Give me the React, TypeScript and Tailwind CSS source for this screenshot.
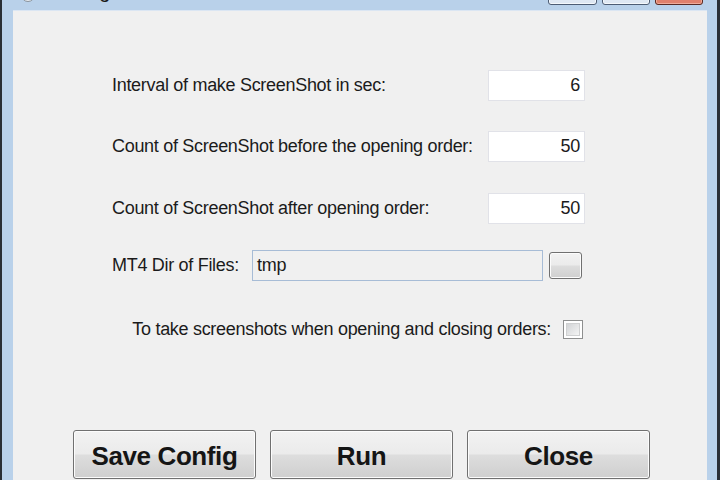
import type { ReactNode } from 'react'

// ── Pieces ───────────────────────────────

function NumberField({ value }: { value: string }): ReactNode {
  return (
    <div className="ml-auto w-[97px] h-[31px] bg-white border border-[#e1e2e8] flex items-center justify-end pr-[4px] text-[18px] tracking-[-0.3px] text-[#1b1b1b]">
      {value}
    </div>
  )
}

function FormRow({ label, children }: { label: string; children: ReactNode }): ReactNode {
  return (
    <div className="h-[31px] flex items-center pl-[99px] pr-[122px]">
      <span className="text-[18px] tracking-[-0.3px] text-[#1b1b1b] whitespace-nowrap">{label}</span>
      {children}
    </div>
  )
}

function BigButton({ label }: { label: string }): ReactNode {
  return (
    <button
      type="button"
      className="w-[183px] h-[49px] rounded-[3px] border border-[#707070] bg-[linear-gradient(to_bottom,#f2f2f2_0%,#ebebeb_48%,#dddddd_52%,#cfcfcf_100%)] flex items-center justify-center pt-[4px] font-['Liberation_Sans',Arial,sans-serif] font-bold text-[26px] tracking-[-0.4px] text-[#151515] shadow-[inset_0_0_0_1px_#fcfcfc]"
    >
      {label}
    </button>
  )
}

// ── Main export ──────────────────────────

export default function App(): ReactNode {
  return (
    <div className="w-[720px] h-[480px] overflow-hidden flex bg-[#b9d1ea] border-l-2 border-r-[3px] border-[#2a2f36] font-['Liberation_Sans',Arial,sans-serif]">
      <div className="flex-1 flex flex-col">
        {/* title bar, mostly cut off above the picture */}
        <div className="h-[10px] shrink-0 overflow-hidden flex items-start">
          <div className="ml-[19px] mt-[-12px] w-[14px] h-[14px] rounded-full bg-[#e8ecf0] border border-[#8a939c]" />
          <span className="ml-[13px] mt-[-20px] text-[20px] leading-[23px] text-[#1b1b1b]">Settings</span>
          <div className="ml-auto mr-[14px] mt-[-15px] flex gap-[5px]">
            <div className="w-[49px] h-[20px] rounded-[3px] border border-[#4e5d74] bg-[#dfe8f3] shadow-[inset_0_0_0_1px_#f4f8fc]" />
            <div className="w-[48px] h-[20px] rounded-[3px] border border-[#4e5d74] bg-[#dfe8f3] shadow-[inset_0_0_0_1px_#f4f8fc]" />
            <div className="w-[48px] h-[20px] rounded-[3px] border border-[#5a2a24] bg-[#e0806c] shadow-[inset_0_0_0_1px_#efab9a]" />
          </div>
        </div>

        {/* client area */}
        <div className="flex-1 ml-[11px] mr-[10px] bg-[#f0f0f0] border-t border-[#dbe6f3] flex flex-col">
          <div className="mt-[59px]">
            <FormRow label="Interval of make ScreenShot in sec:">
              <NumberField value="6" />
            </FormRow>
          </div>
          <div className="mt-[30px]">
            <FormRow label="Count of ScreenShot before the opening order:">
              <NumberField value="50" />
            </FormRow>
          </div>
          <div className="mt-[31px]">
            <FormRow label="Count of ScreenShot after opening order:">
              <NumberField value="50" />
            </FormRow>
          </div>
          <div className="mt-[26px]">
            <FormRow label="MT4 Dir of Files:">
              <div className="ml-auto w-[291px] h-[31px] bg-[#f0f0f0] border border-[#a7bcd6] flex items-center pl-[4px] text-[18px] tracking-[-0.3px] text-[#1b1b1b]">
                tmp
              </div>
              <button
                type="button"
                className="ml-[6px] mr-[3px] w-[33px] h-[27px] rounded-[3px] border border-[#707070] bg-[linear-gradient(to_bottom,#f2f2f2_0%,#ebebeb_48%,#dddddd_52%,#cfcfcf_100%)] shadow-[inset_0_0_0_1px_#fcfcfc]"
              />
            </FormRow>
          </div>
          <div className="mt-[33px] h-[31px] flex items-center justify-end pr-[122px]">
            <span className="text-[18px] tracking-[-0.3px] text-[#1b1b1b] whitespace-nowrap">
              To take screenshots when opening and closing orders:
            </span>
            <div className="ml-[12px] mr-[2px] w-[20px] h-[19px] border border-[#8e8f8f] bg-white p-[2px]">
              <div className="w-full h-full border border-[#cfd0d1] bg-[linear-gradient(135deg,#d2d4d6,#f4f4f4)]" />
            </div>
          </div>

          <div className="mt-[85px] pl-[60px] flex gap-[14px]">
            <BigButton label="Save Config" />
            <BigButton label="Run" />
            <BigButton label="Close" />
          </div>
        </div>
      </div>
    </div>
  )
}
